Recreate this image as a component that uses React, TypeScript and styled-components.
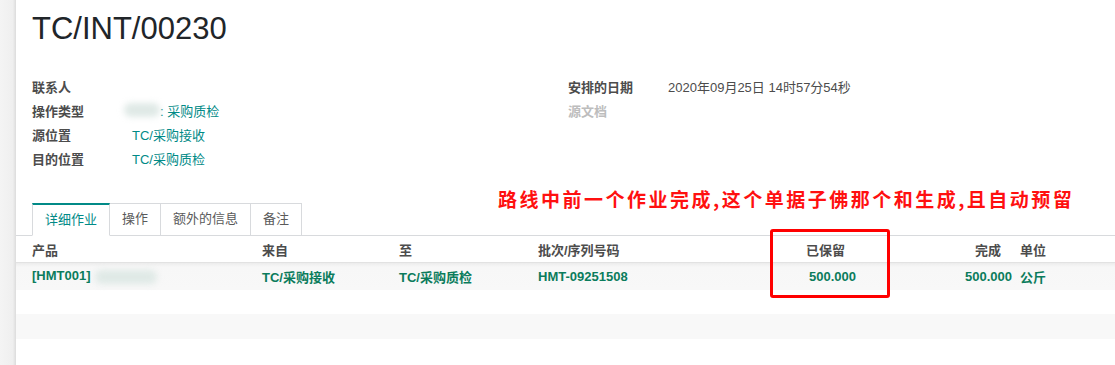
import React from "react";
import styled, { createGlobalStyle } from "styled-components";

const GlobalStyle = createGlobalStyle`
  html, body {
    margin: 0;
    padding: 0;
    background: #fff;
  }
  body {
    font-family: "Liberation Sans", "Noto Sans CJK SC", sans-serif;
    font-size: 13px;
    color: #4c4c4c;
  }
`;

const teal = "#018a87";
const green = "#0b7c5c";

const Page = styled.div`
  display: flex;
  width: 1115px;
  height: 365px;
  overflow: hidden;
  background: #f2f2f2;
`;

const Gutter = styled.div`
  width: 16px;
  flex-shrink: 0;
  background: linear-gradient(90deg, #f4f4f4 0%, #efefef 80%, #dcdcdc 100%);
`;

const Sheet = styled.div`
  position: relative;
  flex: 1;
  background: #fff;
  padding-top: 1px;
`;

const Title = styled.h1`
  margin: 8px 0 0 16px;
  font-family: "Liberation Sans", sans-serif;
  font-weight: 400;
  font-size: 31px;
  line-height: 40px;
  color: #212529;
`;

const Groups = styled.div`
  display: grid;
  grid-template-columns: 536px 1fr;
  margin: 25px 0 0 16px;
`;

const Group = styled.div`
  display: flex;
  flex-direction: column;
`;

const Field = styled.div`
  display: flex;
  align-items: center;
  height: 24px;
`;

const Label = styled.span<{ $empty?: boolean }>`
  width: 100px;
  flex-shrink: 0;
  font-weight: 700;
  color: ${({ $empty }) => ($empty ? "#bdbdbd" : "#4c4c4c")};
`;

const Value = styled.span<{ $link?: boolean }>`
  display: inline-flex;
  align-items: center;
  color: ${({ $link }) => ($link ? teal : "#4c4c4c")};
`;

const Blur = styled.span<{ $w: number }>`
  display: inline-block;
  width: ${({ $w }) => $w}px;
  height: 14px;
  border-radius: 8px;
  background: #dfe9e6;
  filter: blur(3px);
`;

const Note = styled.div`
  position: absolute;
  left: 482px;
  top: 187px;
  font-family: "Noto Sans CJK SC", sans-serif;
  font-weight: 700;
  font-size: 19px;
  letter-spacing: 2.5px;
  line-height: 24px;
  color: #ff1010;
  white-space: nowrap;
`;

const Tabs = styled.ul`
  display: flex;
  list-style: none;
  margin: 33px 0 0;
  padding: 0 0 0 16px;
  border-bottom: 1px solid #d8dadd;
`;

const Tab = styled.li<{ $active?: boolean }>`
  line-height: 30px;
  padding: 0 12px;
  margin-bottom: -1px;
  border: 1px solid #d8dadd;
  border-left-width: ${({ $active }) => ($active ? "1px" : "0")};
  border-top: ${({ $active }) => ($active ? `2px solid ${teal}` : "1px solid #d8dadd")};
  border-bottom-color: ${({ $active }) => ($active ? "#fff" : "#d8dadd")};
  height: ${({ $active }) => ($active ? "30px" : "31px")};
  background: #fff;
  color: ${({ $active }) => ($active ? teal : "#5a5a5a")};
`;

const Table = styled.table`
  width: 100%;
  table-layout: fixed;
  border-collapse: collapse;
`;

const Th = styled.th<{ $num?: boolean }>`
  height: 26px;
  padding: 0 ${({ $num }) => ($num ? "16px" : "5px")} 0 5px;
  text-align: ${({ $num }) => ($num ? "right" : "left")};
  font-weight: 700;
  color: #4c4c4c;
  border-bottom: 1px solid #e2e2e2;
  &:first-child {
    padding-left: 16px;
  }
  &:last-child {
    padding-left: 3px;
  }
`;

const Row = styled.tr<{ $shade?: boolean; $h: number }>`
  height: ${({ $h }) => $h}px;
  background: ${({ $shade }) => ($shade ? "#f8f8f8" : "#fff")};
`;

const FirstRow = styled(Row)`
  background: linear-gradient(180deg, #ececec 0px, #f7f7f7 4px, #f8f8f8 100%);
`;

const Td = styled.td<{ $num?: boolean }>`
  padding: 0 5px;
  text-align: ${({ $num }) => ($num ? "right" : "left")};
  font-weight: 700;
  color: ${green};
  white-space: nowrap;
  &:first-child {
    padding-left: 16px;
  }
  &:last-child {
    padding-left: 3px;
  }
`;

const Highlight = styled.div`
  position: absolute;
  left: 754px;
  top: 229px;
  width: 114px;
  height: 63px;
  border: 3px solid #ff0000;
  border-radius: 3px;
`;

const leftFields = [
  { label: "联系人", value: null },
  { label: "操作类型", value: "op" },
  { label: "源位置", value: "TC/采购接收" },
  { label: "目的位置", value: "TC/采购质检" },
];

const cols = [241, 137, 139, 166, 162, 156];
const headers = [
  { t: "产品" },
  { t: "来自" },
  { t: "至" },
  { t: "批次/序列号码" },
  { t: "已保留", num: true },
  { t: "完成", num: true },
  { t: "单位" },
];

export default function App() {
  return (
    <>
      <GlobalStyle />
      <Page>
        <Gutter />
        <Sheet>
          <Title>TC/INT/00230</Title>
          <Groups>
            <Group>
              {leftFields.map((f) => (
                <Field key={f.label}>
                  <Label>{f.label}</Label>
                  {f.value === "op" ? (
                    <Value $link>
                      <Blur $w={36} style={{ marginLeft: -8 }} />
                      <span>:&nbsp;采购质检</span>
                    </Value>
                  ) : f.value ? (
                    <Value $link>{f.value}</Value>
                  ) : null}
                </Field>
              ))}
            </Group>
            <Group>
              <Field>
                <Label>安排的日期</Label>
                <Value>2020年09月25日 14时57分54秒</Value>
              </Field>
              <Field>
                <Label $empty>源文档</Label>
              </Field>
            </Group>
          </Groups>
          <Note>路线中前一个作业完成,这个单据子佛那个和生成,且自动预留</Note>
          <Tabs>
            <Tab $active>详细作业</Tab>
            <Tab>操作</Tab>
            <Tab>额外的信息</Tab>
            <Tab>备注</Tab>
          </Tabs>
          <Table>
            <colgroup>
              {cols.map((w, i) => (
                <col key={i} style={{ width: w }} />
              ))}
              <col />
            </colgroup>
            <thead>
              <tr>
                {headers.map((h) => (
                  <Th key={h.t} $num={h.num}>
                    {h.t}
                  </Th>
                ))}
              </tr>
            </thead>
            <tbody>
              <FirstRow $shade $h={27}>
                <Td>
                  [HMT001]
                  <Blur $w={62} style={{ verticalAlign: "middle", marginLeft: 4 }} />
                </Td>
                <Td>TC/采购接收</Td>
                <Td>TC/采购质检</Td>
                <Td>HMT-09251508</Td>
                <Td $num>500.000</Td>
                <Td $num>500.000</Td>
                <Td>公斤</Td>
              </FirstRow>
              <Row $h={24}>
                <Td colSpan={7} />
              </Row>
              <Row $shade $h={25}>
                <Td colSpan={7} />
              </Row>
              <Row $h={25}>
                <Td colSpan={7} />
              </Row>
            </tbody>
          </Table>
          <Highlight />
        </Sheet>
      </Page>
    </>
  );
}
